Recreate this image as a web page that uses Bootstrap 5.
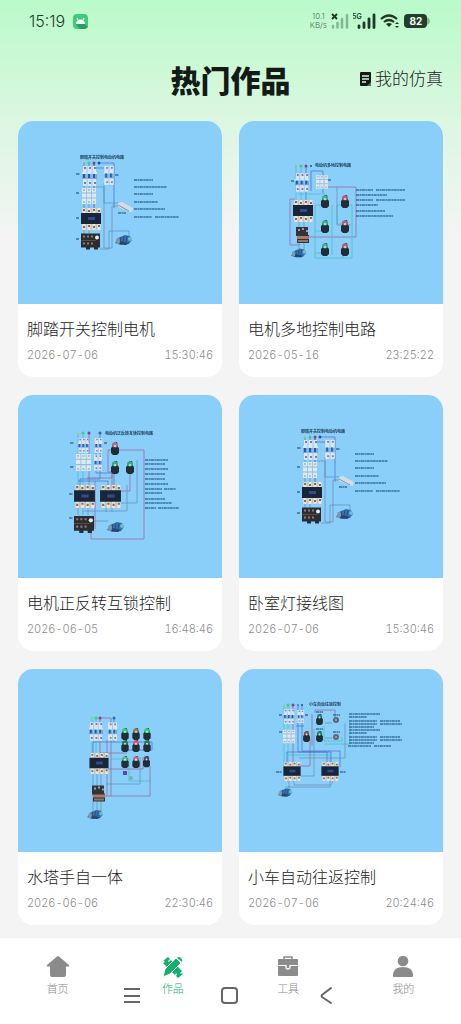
<!DOCTYPE html>
<html lang="zh-CN">
<head>
<meta charset="utf-8">
<meta name="viewport" content="width=device-width, initial-scale=1">
<title>热门作品</title>
<link href="https://cdn.jsdelivr.net/npm/bootstrap@5.3.0/dist/css/bootstrap.min.css" rel="stylesheet">
<style>
body{background:#f4f4f4 linear-gradient(#bafac9 0,#dbf7e1 120px,#f4f4f4 240px) no-repeat;font-family:"Inter","Noto Sans CJK SC",sans-serif;font-weight:300;color:#222}
.status{height:42px;padding:0 31px 0 29px;color:#213c2a}
.clock{font-size:16px;line-height:20px}
.rate{font-size:8px;line-height:9px;color:#4c7358}
.topbar{height:79px;padding:0 18px 6px}
.topbar h1{font-family:"Noto Sans CJK SC",sans-serif;font-size:30px;font-weight:900;line-height:36px;color:#141a16}
.mine{font-size:17px;line-height:24px;color:#1c211e}
.works{gap:18px 17px;padding:0 18px 13px;grid-template-columns:1fr 1fr}
.work{border-radius:15px;background:#fff}
.work>svg{width:100%;background:#8acefa}
.work-info{padding:13px 9px 13px}
.work h2{font-size:16px;line-height:24px;font-weight:300;color:#222;margin-bottom:5px}
.stamp{font-size:11px;line-height:18px;color:#8b8b8b;font-variant-numeric:tabular-nums}
.tabs{height:86px;padding-top:17px}
.tab{font-size:11px;line-height:16px;color:#8b8b8b;gap:3px}
.tab.on{color:#12b16b}
.syskeys{bottom:16px;gap:74px;pointer-events:none}
.syskeys button{pointer-events:auto;color:#666}
.soft{filter:blur(.6px)}
.cap{font-family:"Noto Sans CJK SC",sans-serif;font-size:4px;font-weight:700;fill:#1d3e59}
.note{stroke:#27608f;stroke-width:1.3;stroke-dasharray:3 .5 2 .4;opacity:.85;fill:none}
.w{fill:none;stroke-width:.7;opacity:.85}
.r{stroke:#a14f80}.b{stroke:#3b5fc9}.g{stroke:#38bfb5}.k{stroke:#60809e}
</style>
</head>
<body class="min-vh-100 d-flex flex-column">
<svg width="0" height="0" class="position-absolute" aria-hidden="true">
<defs>
<symbol id="brk3" viewBox="0 0 15 20"><path d="M1 0h13v6h1v7h-1v7H1v-7H0V6h1z" fill="#d9e7f2"/><path d="M0 8h15v5H0z" fill="#7da5d6"/><path d="M2 8v4M7 8v4M12 8v4" stroke="#2658ae" stroke-width="2"/><path d="M2 2h2M7 2h2M12 2h2M2 17h2M7 17h2M12 17h2" stroke="#997391" stroke-width="2"/><path d="M5 0v20M10 0v20" stroke="#8acefa"/></symbol>
<symbol id="brk2" viewBox="0 0 10 20"><path d="M0 0h10v20H0z" fill="#d9e7f2"/><path d="M0 8h10v5H0z" fill="#82a9d8"/><path d="M2 8v4M7 8v4" stroke="#2b5eb2" stroke-width="2"/><path d="M2 2h2M7 2h2M2 17h2M7 17h2" stroke="#a17592" stroke-width="2"/><path d="M5 0v20" stroke="#8acefa"/></symbol>
<symbol id="fuse" viewBox="0 0 14 16"><path d="M0 0h4v16H0zM5 0h4v16H5zM10 0h4v16h-4z" fill="#dde8ef"/><path d="M0 5h14M0 10h14" stroke="#9cb7ce"/><path d="M1 2h2M6 2h2M11 2h2M1 14h2M6 14h2M11 14h2" stroke="#a38b9e"/></symbol>
<symbol id="kmc" viewBox="0 0 20 22"><path d="M1 0h18v22H1z" fill="#b9c6ce"/><path d="M3 0v5M8 0v5M13 0v5M18 0v5M3 16v6M8 16v6M13 16v6M18 16v6" stroke="#efe5d4" stroke-width="3"/><path d="M2 2h2M7 3h2M12 2h2M17 3h2M2 19h2M7 18h2M12 19h2M17 18h2" stroke="#8e6753" stroke-width="2"/><rect y="5" width="20" height="11" fill="#1a2638"/><path d="M7 9h7v3H7z" fill="#2c4d93"/></symbol>
<symbol id="relay" viewBox="0 0 19 16"><path d="M0 0h19v14h-2v2h-4v-2H9v2H5v-2H0z" fill="#2b2d32"/><path d="M2 3h2M6 3h2M10 3h2M2 10h2M6 10h2M10 10h2" stroke="#967868" stroke-width="2"/><circle cx="16" cy="4" r="2" fill="#e6ecef"/><path d="M0 7h15" stroke="#5a4a45"/></symbol>
<symbol id="relay2" viewBox="0 0 13 16"><path d="M0 0h12v8h1v8H1V9H0z" fill="#343338"/><path d="M1 9h12v3H1z" fill="#ad7962"/><path d="M2 3h2M6 2h2M10 4h2" stroke="#91a4ad" stroke-width="2"/><path d="M2 14h10" stroke="#897b70" stroke-width="2"/></symbol>
<symbol id="motor" viewBox="0 0 18 12"><path d="M0 9l3-5 7-3 5 1 2 4-3 4-8 1z" fill="#3972af"/><path d="M3 10l8 1 3-2-9-2z" fill="#23466f"/><path d="M6 3l-1 5M9 2L8 8M12 2l-1 6" stroke="#254c8d"/><ellipse cx="3" cy="7" rx="2" ry="3" fill="#8099a2"/><circle cx="15" cy="5" r="2" fill="#6dbfc1"/></symbol>
<symbol id="btn" viewBox="0 0 8 13"><path d="M1 5l1-4 4-1 1 5 1 1v5l-2 2H2l-2-2V6z" fill="#222d35"/><ellipse cx="4" cy="3" rx="3" ry="2.5" fill="currentColor"/><circle cx="4" cy="4" r="1" fill="#dce6e4"/></symbol>
<symbol id="pedal" viewBox="0 0 204 184">
<path class="w b" d="M81 42h15v45M76 42v5h12"/><path class="w k" d="M66 42v74M71 42v74M76 42v48M86 62v20h15M78 66h8v61h8v-42h6M82 128h9v-18h20v5"/>
<path class="w g" d="M66 42v48M71 42v22"/><path class="w r" d="M76 42v48"/>
<circle cx="66" cy="42" r="1" fill="#c7ac63"/><circle cx="71" cy="42" r="1.5" fill="#35cf87"/><circle cx="76" cy="42" r="1.5" fill="#8c3c83"/><circle cx="81" cy="42" r="1.5" fill="#244caf"/>
<use href="#brk3" x="64" y="45" width="15" height="20"/><use href="#brk2" x="86" y="45" width="10" height="19"/><use href="#fuse" x="64" y="67" width="14" height="16"/><use href="#kmc" x="63" y="87" width="20" height="22"/><use href="#relay" x="63" y="112" width="19" height="17"/><use href="#motor" x="97" y="113" width="18" height="12"/>
<path d="M100 82l4-1 11 6-1 4-4-1-10-4z" fill="#d5dde0"/><path d="M100 84l11 6" stroke="#8295a0"/>
<path class="note" d="M58 53h4M58 72h3M97 54h4M58 97h3M58 118h3M100 92h8"/>
<text class="cap" x="62" y="38">脚踏开关控制电动机电路</text>
<path class="note" d="M116 59h19M116 66h33M116 73h19M116 81h24M116 88h31M116 96h18m3 0h24"/>
</symbol>
</defs>
</svg>

<div class="status d-flex align-items-center justify-content-between">
  <div class="d-flex align-items-center gap-2"><span class="clock">15:19</span>
    <svg width="15" height="15" viewBox="0 0 15 15"><rect width="15" height="15" rx="4" fill="#3dcc7e"/><path d="M3 10h9l3 3-3 2H7z" fill="#259e5e"/><path d="M3 10a4.500 4.500 0 0 1 9 0z" fill="#fff"/><path d="M4 4l1 2M11 4l-1 2" stroke="#fff"/></svg></div>
  <div class="d-flex align-items-center">
    <span class="rate text-center me-1">10.1<br>KB/s</span>
    <svg width="18" height="16" viewBox="0 0 18 16"><path d="M2 14.500V13M6.500 14.500V10M11 14.500V6M16 14.500V2" stroke="#83b893" stroke-width="2.600" stroke-linecap="round"/><path d="M1 1l5 5M6 1L1 6" stroke="#1d3525" stroke-width="1.800"/></svg>
    <svg class="ms-1" width="23" height="16" viewBox="0 0 23 16"><text x="-1" y="6" font-size="7" font-weight="600" fill="#213c2a">5G</text><path d="M6 14.500V13M11 14.500V10M16 14.500V6M21 14.500V2" stroke="#20382a" stroke-width="2.800" stroke-linecap="round"/></svg>
    <svg class="ms-1" width="20" height="16" viewBox="0 0 20 16" fill="none" stroke="#20382a" stroke-width="2.200"><path d="M1 6q8-7 16 0M4 9q5-4 10 0"/><path d="M6 11q3-2 6 0l-3 3z" fill="#20382a" stroke="none"/><path d="M15 11l2-2 2 2zM15 13l2 2 2-2z" fill="#20382a" stroke="none"/></svg>
    <svg class="ms-1" width="26" height="14" viewBox="0 0 26 14"><path d="M22 3q4 1 4 4t-4 4z" fill="#83b893"/><rect width="23" height="14" rx="4" fill="#243c2d"/><text x="12" y="11" text-anchor="middle" font-size="10" font-weight="700" fill="#effff3">82</text></svg>
  </div>
</div>

<header class="topbar row g-0 align-items-center">
  <div class="col"></div>
  <h1 class="col-auto mb-0">热门作品</h1>
  <div class="col d-flex justify-content-end"><a href="#mine" class="mine d-flex align-items-center text-decoration-none text-nowrap"><svg class="me-1" width="11" height="14" viewBox="0 0 11 14"><rect width="11" height="14" rx="1" fill="#141a16"/><path d="M2 4h7M2 7h7M2 10h4" stroke="#d2f7db" stroke-width="1.300"/><path d="M7 14l4-4v4z" fill="#5b7061"/></svg>我的仿真</a></div>
</header>

<main class="works d-grid">
<article class="work overflow-hidden">
  <svg class="d-block" viewBox="0 0 204 183"><g class="soft"><use href="#pedal" width="204" height="184"/></g></svg>
  <div class="work-info"><h2>脚踏开关控制电机</h2><div class="stamp d-flex justify-content-between"><span>2026-07-06</span><span>15:30:46</span></div></div>
</article>

<article class="work overflow-hidden">
  <svg class="d-block" viewBox="0 0 204 183"><g class="soft">
  <path class="w b" d="M67 45v40M72 70V50h12v22"/><path class="w r" d="M88 66h29v50H70M56 78h-5v46h10"/><path class="w g" d="M57 45v35M62 45v35M59 73h27v6M93 84v50M76 84v53h28v-6M82 84h-6M82 110h-6M82 132h-6M98 103v-19h4M98 103h8M109 84h4v53h-9"/><path class="w k" d="M60 98v34M65 98v34M98 66v38h14"/>
  <circle cx="57" cy="45" r="1" fill="#c0a968"/><circle cx="62" cy="45" r="1.500" fill="#35cf87"/><circle cx="67" cy="45" r="1.500" fill="#8c3c83"/><circle cx="72" cy="45" r="1" fill="#244caf"/>
  <use href="#brk3" x="56" y="52" width="14" height="19"/><use href="#fuse" x="77" y="52" width="12" height="18"/><use href="#kmc" x="54" y="79" width="20" height="22"/><use href="#relay2" x="57" y="106" width="13" height="16"/><use href="#motor" x="52" y="126" width="16" height="12"/>
  <g color="#3fae8d"><use href="#btn" x="82" y="74" width="8" height="13"/><use href="#btn" x="82" y="99" width="8" height="13"/><use href="#btn" x="82" y="122" width="8" height="13"/></g>
  <g color="#b66172"><use href="#btn" x="102" y="74" width="8" height="13"/><use href="#btn" x="102" y="99" width="8" height="13"/><use href="#btn" x="102" y="122" width="8" height="13"/></g>
  <text class="cap" x="76" y="46">电动机多地控制电路</text>
  <path class="note" d="M52 60h3M89 59h3M117 69h17m3 0h29M117 74h31M117 79h17m3 0h29M117 84h22M117 90h29M117 95h37"/></g></svg>
  <div class="work-info"><h2>电机多地控制电路</h2><div class="stamp d-flex justify-content-between"><span>2026-05-16</span><span>23:25:22</span></div></div>
</article>

<article class="work overflow-hidden">
  <svg class="d-block" viewBox="0 0 204 183"><g class="soft">
  <path class="w g" d="M60 38v54M65 38v54"/><path class="w r" d="M71 38v54M101 55h25v89H73v-7M94 55h-4v22h4M69 83h25V78M77 86v48M112 78v18h-9M94 78v14"/><path class="w b" d="M82 38v46H62v6M78 43v35h18v13M60 86h30v5"/><path class="w k" d="M60 110v10M65 110v10M70 110v10M66 116h43V90M88 110v7M94 110v7M119 65v43h-16M76 126h14"/>
  <circle cx="60" cy="38" r="1" fill="#b6c879"/><circle cx="65" cy="38" r="1.500" fill="#35cf87"/><circle cx="71" cy="38" r="1.500" fill="#8c3c83"/><circle cx="82" cy="38" r="1.500" fill="#3c688a"/>
  <use href="#brk3" x="58" y="43" width="15" height="15"/><use href="#brk2" x="76" y="43" width="9" height="15"/><use href="#fuse" x="58" y="58" width="15" height="19"/><use href="#brk2" x="76" y="58" width="8" height="19"/>
  <use href="#kmc" x="56" y="90" width="21" height="23"/><use href="#kmc" x="82" y="90" width="21" height="23"/><use href="#relay" x="56" y="121" width="20" height="17"/><use href="#motor" x="89" y="126" width="18" height="12"/>
  <use href="#btn" x="93" y="47" width="8" height="13" color="#bc6a7e"/><g color="#37ae77"><use href="#btn" x="93" y="66" width="8" height="13"/><use href="#btn" x="108" y="66" width="8" height="13"/></g>
  <text class="cap" x="87" y="40">电动机正反转互锁控制电路</text>
  <path class="note" d="M52 48h4M86 48h3M52 72h4M51 99h4M51 123h4M127 65h23M127 69h20M127 74h23M127 79h20M127 84h20M127 89h23M127 94h17m2 0h12M127 98h17M127 104h20M127 108h27M127 113h11m2 0h21"/></g></svg>
  <div class="work-info"><h2>电机正反转互锁控制</h2><div class="stamp d-flex justify-content-between"><span>2026-06-05</span><span>16:48:46</span></div></div>
</article>

<article class="work overflow-hidden">
  <svg class="d-block" viewBox="0 0 204 183"><g class="soft"><use href="#pedal" width="204" height="184"/></g></svg>
  <div class="work-info"><h2>卧室灯接线图</h2><div class="stamp d-flex justify-content-between"><span>2026-07-06</span><span>15:30:46</span></div></div>
</article>

<article class="work overflow-hidden">
  <svg class="d-block" viewBox="0 0 204 183"><g class="soft">
  <path class="w g" d="M74 49v38M78 49v38M93 90h18v22h22"/><path class="w b" d="M75 85V73h59v8H104M96 49v24"/><path class="w r" d="M82 49v35h27M82 49h11v78M132 97v30H86M88 100h37V88M89 71v56"/><path class="w k" d="M75 103v41M79 103v41M83 103v41M88 115h34V88"/>
  <circle cx="74" cy="49" r="2" fill="#76dba1"/><circle cx="78" cy="49" r="1.500" fill="#35cf87"/><circle cx="82" cy="49" r="1.500" fill="#8c3c83"/><circle cx="96" cy="49" r="1.500" fill="#315fd0"/>
  <use href="#brk3" x="71" y="53" width="14" height="19"/><use href="#brk2" x="90" y="53" width="9" height="19"/><use href="#kmc" x="71" y="84" width="20" height="21"/><use href="#relay2" x="74" y="116" width="13" height="17"/><use href="#motor" x="69" y="140" width="17" height="11"/>
  <g color="#20d46e"><use href="#btn" x="103" y="59" width="8" height="12"/><use href="#btn" x="125" y="59" width="8" height="12"/></g><use href="#btn" x="114" y="59" width="8" height="12" color="#837d54"/>
  <g color="#237b55"><use href="#btn" x="103" y="71" width="8" height="12"/><use href="#btn" x="125" y="71" width="8" height="12"/></g><use href="#btn" x="114" y="71" width="8" height="12" color="#e35163"/>
  <use href="#btn" x="103" y="87" width="8" height="12" color="#54ba83"/><use href="#btn" x="114" y="87" width="8" height="12" color="#c27180"/><use href="#btn" x="125" y="86" width="7" height="13" color="#4b5368"/>
  <rect x="105" y="102" width="4" height="4" fill="#514db6"/><circle cx="113" cy="109" r="2" fill="#6bb8ba"/></g></svg>
  <div class="work-info"><h2>水塔手自一体</h2><div class="stamp d-flex justify-content-between"><span>2026-06-06</span><span>22:30:46</span></div></div>
</article>

<article class="work overflow-hidden">
  <svg class="d-block" viewBox="0 0 204 183"><g class="soft">
  <path class="w g" d="M45 36v60M49 36v60M49 86h42v8M85 57v15h18v-4M85 75h26V52"/><path class="w r" d="M54 36v58M76 44v-3h20v7M71 68v29H61M73 45v32"/><path class="w b" d="M59 36v47h33v12M63 36v46h38v16M57 57h8M48 94V83h40v11"/><path class="w k" d="M50 110v10M55 110v6h36v-6M46 118h45l4-8M75 60v47H61M106 54v35H60M86 54h7M86 69h7"/>
  <circle cx="45" cy="36" r="1" fill="#b6c879"/><circle cx="49" cy="36" r="1.500" fill="#35cf87"/><circle cx="54" cy="36" r="1.500" fill="#9c3c73"/><circle cx="59" cy="36" r="1" fill="#456dcb"/><circle cx="63" cy="36" r="1" fill="#244caf"/>
  <use href="#brk3" x="44" y="40" width="12" height="15"/><use href="#brk2" x="58" y="41" width="7" height="13"/><use href="#fuse" x="44" y="60" width="12" height="15"/><use href="#kmc" x="44" y="93" width="18" height="19"/><use href="#kmc" x="82" y="93" width="18" height="19"/><use href="#motor" x="39" y="118" width="15" height="11"/>
  <use href="#btn" x="64" y="62" width="7" height="11" color="#88545c"/><g color="#278b65"><use href="#btn" x="77" y="45" width="7" height="11"/><use href="#btn" x="77" y="62" width="7" height="11"/></g>
  <circle cx="97" cy="51" r="3" fill="#5c6874"/><circle cx="97" cy="68" r="3" fill="#5c6874"/><circle cx="97" cy="51" r="1" fill="#b1a7a0"/><circle cx="97" cy="68" r="1" fill="#b1a7a0"/>
  <text class="cap" x="70" y="37">小车自动往返控制</text>
  <path class="note" d="M40 46h3M66 46h3M40 63h3M37 103h6M101 103h6M77 43h7M77 60h7M94 46h7M94 63h7M110 45h31M110 48h18M110 52h28m3 0h20M110 55h28m3 0h22M110 58h25M110 61h31M110 64h18M110 68h28m3 0h20M110 71h28m3 0h22M110 74h25M109 77h23m3 0h17"/></g></svg>
  <div class="work-info"><h2>小车自动往返控制</h2><div class="stamp d-flex justify-content-between"><span>2026-07-06</span><span>20:24:46</span></div></div>
</article>
</main>

<footer class="position-relative bg-white mt-auto">
<nav class="tabs row g-0 text-center">
  <a href="#home" class="tab col d-flex flex-column align-items-center text-decoration-none"><svg width="24" height="23" viewBox="0 0 24 23" fill="#8b8b8b"><path d="M11 1.500q1-.8 2 0l10 8.500q1 1.500-1 1.500h-2V20q0 2-2 2H6q-2 0-2-2v-8.500H2Q0 11.500 1 10z"/></svg>首页</a>
  <a href="#works" class="tab on col d-flex flex-column align-items-center text-decoration-none" aria-current="page"><svg width="24" height="23" viewBox="0 0 24 23" fill="#12b16b"><path d="M2 6l5-4 2 2-2 2 1 1 2-2 11 11-2 2 1 1 1-1 1 1-5 4-2-2 1-2-1-1-1 2L2 8l2-1-1-1z"/><path d="M2 22l2-8L15 3l5 5L9 19z" stroke="#fff" stroke-width="1"/><path d="M16 3q2-2 4 0t1 4z"/></svg>作品</a>
  <a href="#tools" class="tab col d-flex flex-column align-items-center text-decoration-none"><svg width="24" height="23" viewBox="0 0 24 23" fill="#8b8b8b"><path d="M8 6V2h8v4" fill="none" stroke="#8b8b8b" stroke-width="1.500"/><path d="M3 4h18q1 0 1 1v5H2V5q0-1 1-1zM2 11h20v9q0 1-1 1H3q-1 0-1-1z"/><path d="M10 10v2q0 2 2 2t2-2v-2" fill="#8b8b8b" stroke="#fff" stroke-width="1.300"/></svg>工具</a>
  <a href="#me" class="tab col d-flex flex-column align-items-center text-decoration-none"><svg width="24" height="23" viewBox="0 0 24 23" fill="#8b8b8b"><circle cx="12" cy="6" r="5.300"/><path d="M2 21v-2q1-7 10-7t10 7v2q0 1-1 1H3q-1 0-1-1z"/></svg>我的</a>
</nav>
<div class="syskeys position-absolute start-0 end-0 d-flex justify-content-center">
  <button type="button" class="btn p-0 border-0 lh-1" aria-label="最近任务"><svg width="24" height="24" viewBox="0 0 24 24" fill="none" stroke="currentColor" stroke-width="2"><path d="M3 5h16M3 12h16M3 18h16"/></svg></button>
  <button type="button" class="btn p-0 border-0 lh-1" aria-label="主屏幕"><svg width="24" height="24" viewBox="0 0 24 24" fill="none" stroke="currentColor" stroke-width="2"><rect x="3" y="4" width="15" height="15" rx="3"/></svg></button>
  <button type="button" class="btn p-0 border-0 lh-1" aria-label="返回"><svg width="24" height="24" viewBox="0 0 24 24" fill="none" stroke="currentColor" stroke-width="2" stroke-linecap="round" stroke-linejoin="round"><path d="M14 4L5 11q-1 1 0 2l9 6"/></svg></button>
</div>
</footer>
<script src="https://cdn.jsdelivr.net/npm/bootstrap@5.3.0/dist/js/bootstrap.bundle.min.js"></script>
</body>
</html>
